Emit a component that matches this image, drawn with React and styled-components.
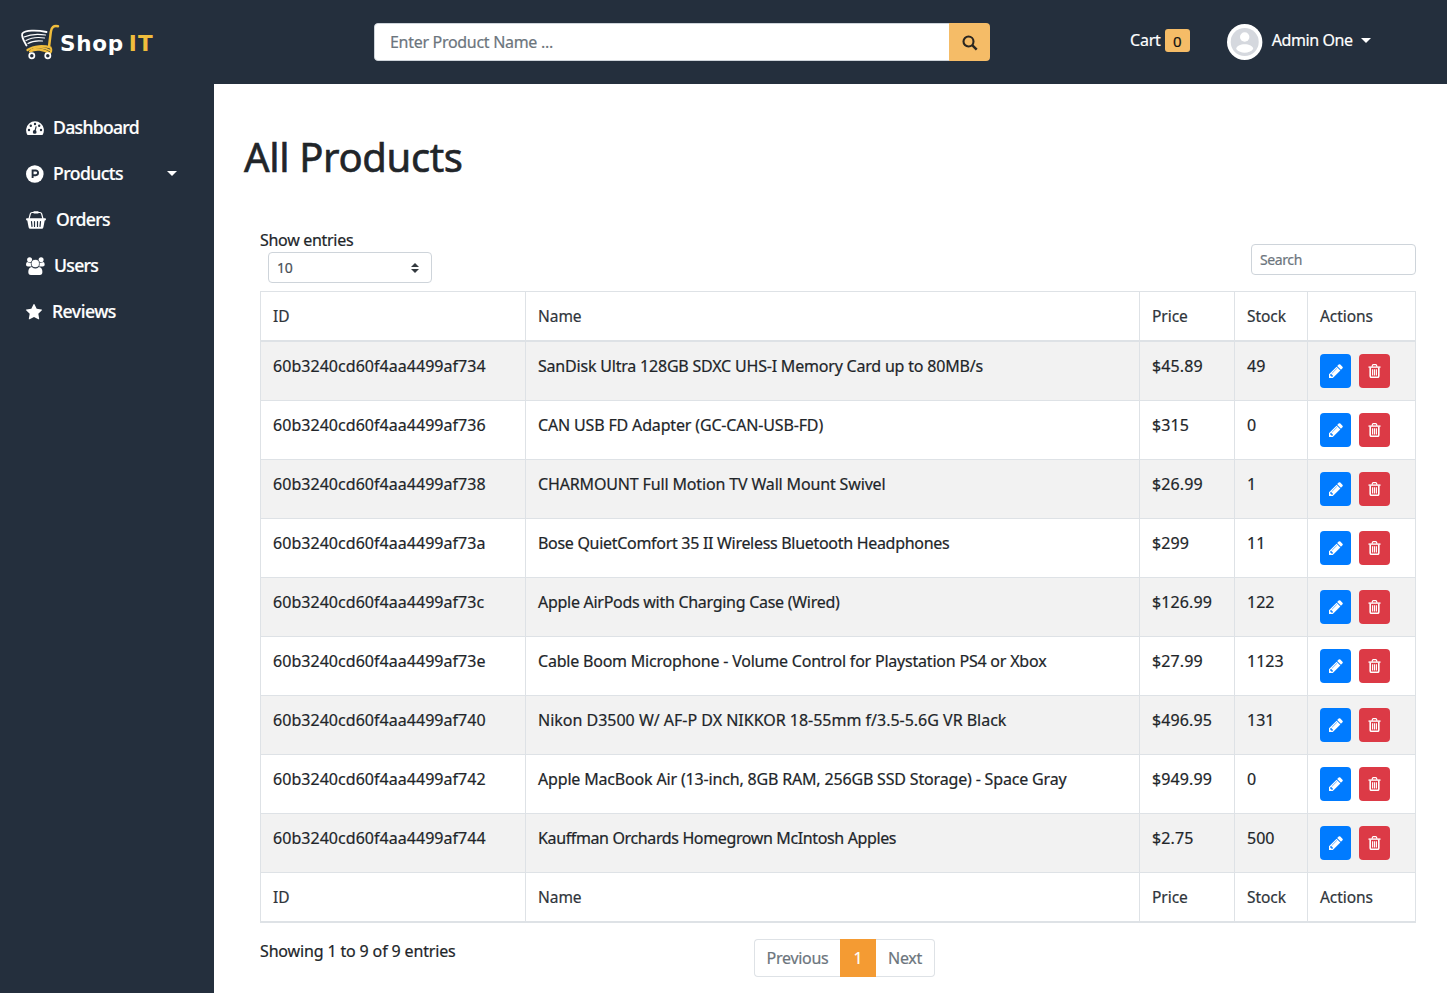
import React from 'react';
import styled, { createGlobalStyle, css } from 'styled-components';

const Global = createGlobalStyle`
  *, *::before, *::after { box-sizing: border-box; }
  body { margin: 0; background: #fff; color: #212529; font: 400 16px/24px 'Noto Sans', 'Open Sans', sans-serif; letter-spacing: -0.3px; -webkit-text-stroke: 0.2px; }
`;
const Page = styled.div`min-height: 993px; display: flex; flex-direction: column;`;
const Navbar = styled.header`height: 84px; background: #242f3d; display: flex; color: #fff;`;
const Brand = styled.div`width: 374px; padding: 23px 0 0 20px; display: flex; align-items: flex-start;`;
const BrandName = styled.span`
  font: 700 21.5px/42px 'DejaVu Sans', sans-serif; letter-spacing: 0.7px; -webkit-text-stroke: 0;
  b { color: #f0bd3c; margin-left: 5px; letter-spacing: 1.2px; }
`;
const SearchBar = styled.form`
  display: flex; width: 616px; height: 38px; margin-top: 23px; border-radius: 4px; overflow: hidden;
`;
const SearchInput = styled.input`
  flex: 1; border: 1px solid #ced4da; border-right: 0; border-radius: 4px 0 0 4px; padding: 0 15px;
  font: inherit; letter-spacing: -0.3px; outline: 0;
  &::placeholder { color: #6c757d; opacity: 1; }
`;
const SearchButton = styled.button`
  width: 41px; border: 0; background: #f5bc67; color: #2a2620; padding: 2px 0 0; display: grid; place-items: center;
`;
const Cart = styled.div`margin: 29px 0 0 140px; display: flex; height: 24px; line-height: 23px; gap: 4px; letter-spacing: -0.2px;`;
const Badge = styled.span`
  width: 25px; height: 23px; border-radius: 3px; background: #f5bc67; color: #111; text-align: center; font-size: 15px; line-height: 24px;
`;
const Account = styled.div`margin: 24px 0 0 37px; display: flex; gap: 9px; line-height: 33px; letter-spacing: -0.4px;`;
const Caret = styled.i`
  width: 0; height: 0; border: solid transparent; border-width: ${p => p.$size}px ${p => p.$size}px 0; border-top-color: #fff;
  margin: ${p => p.$margin};
`;
const Body = styled.div`display: flex; flex: 1;`;
const Sidebar = styled.nav`width: 214px; background: #242f3d; padding-top: 20px;`;
const NavItem = styled.a`
  display: flex; height: 46px; align-items: center; padding-left: 25px; color: #fff; font-weight: 500; font-size: 17.6px;
  letter-spacing: ${p => p.$ls || '-0.7px'};
  svg { margin: 2px ${p => p.$gap || 8}px 0 0; flex: none; }
`;
const Main = styled.main`flex: 1; padding: 48px 31px 0 30px;`;
const Title = styled.h1`margin: 0; font-size: 40px; line-height: 50px; font-weight: 400; letter-spacing: -0.35px; -webkit-text-stroke: 0.6px;`;
const Content = styled.section`padding: 46px 0 0 16px;`;
const Tools = styled.div`display: flex; justify-content: space-between; height: 63px;`;
const Select = styled.div`
  width: 164px; height: 31px; margin-left: 8px; border: 1px solid #ced4da; border-radius: 4px;
  display: flex; align-items: center; justify-content: space-between; padding: 0 12px 0 8px; font-size: 14px; color: #495057;
`;
const Filter = styled.input`
  width: 165px; height: 31px; margin-top: 16px; border: 1px solid #ced4da; border-radius: 4px; padding: 0 8px; font: inherit; font-size: 14px; letter-spacing: -0.4px;
  &::placeholder { color: #6c757d; opacity: 1; }
`;
const Table = styled.table`
  width: 1156px; border-collapse: collapse; table-layout: fixed; border: 1px solid #dee2e6;
`;
const cell = css`border: 1px solid #dee2e6; padding: 12px; text-align: left; vertical-align: top; white-space: nowrap;`;
const HeadCell = styled.th`${cell} font-weight: 400; height: 49px; font-size: 15.5px; border-bottom-width: 2px; letter-spacing: -0.05px; color: #2f353b;`;
const Cell = styled.td`${cell} height: 59px; letter-spacing: ${p => p.$tracking ?? 0}px;`;
const Row = styled.tr`background: ${p => (p.$odd ? '#f2f2f2' : '#fff')};`;
const Actions = styled.div`display: flex; gap: 8px;`;
const ActionButton = styled.button`
  width: 31px; height: 34px; border: 0; border-radius: 4px; padding: 0; display: grid; place-items: center; color: #fff;
  background: ${p => (p.$danger ? '#dc3a46' : '#007bff')};
`;
const Footer = styled.footer`display: flex; margin-top: 16px;`;
const Info = styled.div`width: 494px; letter-spacing: -0.15px;`;
const Pager = styled.div`display: flex; height: 38px;`;
const PageLink = styled.a`
  border: 1px solid ${p => (p.$active ? '#f49b33' : '#dee2e6')}; background: ${p => (p.$active ? '#f49b33' : '#fff')};
  color: ${p => (p.$active ? '#fff' : '#6c757d')}; width: ${p => p.$w}px; line-height: 36px; text-align: center; border-radius: ${p => p.$radius || 0};
  ${p => p.$edge && `border-${p.$edge}: 0;`}
`;

const Logo = () => (
  <svg width="40" height="38" viewBox="0 0 40 38" fill="none" strokeLinecap="round">
    <path d="M26.500 9C17 7 5 7 2.300 10.500C1 14 4.500 19 6.500 22.500" stroke="#fff" strokeWidth="1.800" />
    <path d="M25.500 12C18 10.800 10 11.300 4 14M24.500 15C18 14 11 14.700 6 17.500M22.500 18C18 17.500 12 18 8 20.500" stroke="#fff" strokeWidth="1.200" />
    <path d="M38 3.300C33.500 2.500 31.500 4 30.800 9L29 24" stroke="#f0bd3c" strokeWidth="2.500" />
    <path d="M7.500 27C14 22.300 24 22.500 30.500 24.500C32 27 31 29.500 29.500 30.500C24 25.800 15 25.500 10 28.500" stroke="#f0bd3c" strokeWidth="2.200" />
    <path d="M11 27C18 23.500 25 24.500 30 27.500" stroke="#f0bd3c" strokeWidth="1.600" />
    <circle cx="11.800" cy="32.800" r="2.600" stroke="#fff" strokeWidth="1.700" />
    <circle cx="27.800" cy="32.800" r="2.600" stroke="#fff" strokeWidth="1.700" />
  </svg>
);
const SearchIcon = () => (
  <svg width="16" height="16" viewBox="0 0 16 16" fill="none" stroke="currentColor" strokeWidth="2.100"><circle cx="6.500" cy="6.500" r="5" /><path d="M10.200 10.200L14.700 14.700" strokeWidth="2.500" /></svg>
);
const Avatar = () => (
  <svg width="36" height="36" viewBox="0 0 36 36"><ellipse cx="17.700" cy="18" rx="17.700" ry="18" fill="#fff" /><circle cx="17.700" cy="18" r="14" fill="#d5d8de" /><circle cx="17.700" cy="13" r="4.700" fill="#fff" /><path d="M9.200 25C9.200 18.500 26.200 18.500 26.200 25C22.200 30 13.200 30 9.200 25Z" fill="#fff" /></svg>
);
const Dashboard = () => (
  <svg width="20" height="18" viewBox="0 0 20 18" fill="#fff"><path d="M2.500 16A8.900 8.900 0 1 1 17.500 16Z" /><g fill="#242f3d"><circle cx="4" cy="11" r="1.200" /><circle cx="5.800" cy="6.800" r="1.200" /><circle cx="10" cy="5" r="1.200" /><circle cx="14.200" cy="6.800" r="1.200" /><circle cx="16" cy="11" r="1.200" /><circle cx="9.700" cy="12.900" r="1.900" /></g><path d="M9.800 12.500L11.200 7.300" stroke="#242f3d" strokeWidth="1.200" /></svg>
);
const ProductIcon = () => (
  <svg width="20" height="18" viewBox="0 0 20 18"><circle cx="9.800" cy="9" r="8.800" fill="#fff" /><path d="M7.600 13V5.500H10.700A2.350 2.350 0 0 1 10.700 10.200H7.600" fill="none" stroke="#242f3d" strokeWidth="1.900" /></svg>
);
const Basket = () => (
  <svg width="22" height="18" viewBox="0 0 22 18"><path d="M4 8L5.300 3Q5.700 1.500 7.100 1.500H14.900Q16.300 1.500 16.700 3L18 8" fill="none" stroke="#fff" strokeWidth="1.200" /><rect x="8.300" y=".3" width="5.400" height="2.300" rx=".8" fill="#fff" /><path d="M1.900 7.200H20.100Q21 7.200 21 8.300T20.100 9.400H19.700L18.400 16.200Q18.100 17.800 16.700 17.800H5.300Q3.900 17.800 3.600 16.200L2.300 9.400H1.900Q1 9.400 1 8.300T1.900 7.200Z" fill="#fff" /><path d="M6.500 10.600L7 15.400M9.500 10.600V15.400M12.500 10.600V15.400M15.500 10.600L15 15.400" stroke="#242f3d" strokeWidth="1.200" strokeLinecap="round" /></svg>
);
const Users = () => (
  <svg width="20" height="18" viewBox="0 0 20 18" fill="#fff"><circle cx="4.600" cy="2.700" r="2.500" /><circle cx="16.100" cy="2.700" r="2.500" /><path d="M6.500 9.500H3Q1 9.500 1 7.800Q1 5 2.400 5Q4.600 6.300 7 5.200ZM14.200 9.500H17.700Q19.700 9.500 19.700 7.800Q19.700 5 18.300 5Q16.100 6.300 13.700 5.200Z" /><path d="M6.800 10Q10.350 13 13.900 10Q17.400 10.300 17.400 15Q17.400 17.900 14.800 17.900H5.900Q3.300 17.900 3.300 15Q3.300 10.300 6.800 10Z" /><circle cx="10.350" cy="6.500" r="4.100" stroke="#242f3d" strokeWidth=".7" /></svg>
);
const Star = () => (
  <svg width="18" height="18" viewBox="-90 -90 1844 1844" fill="#fff"><path d="M1664 615q0 22-26 48l-363 354 86 500q1 7 1 20 0 21-10.500 35.500T1321 1587q-19 0-40-12l-449-236-449 236q-22 12-40 12-21 0-31.500-14.500T301 1537q0-6 2-20l86-500L25 663Q0 636 0 615q0-37 56-46l502-73L783 41q19-41 49-41t49 41l225 455 502 73q56 9 56 46z" /></svg>
);
const Pencil = () => (
  <svg width="14" height="14" viewBox="0 0 1536 1536" fill="currentColor"><path d="M363 1408l91-91-235-235-91 91v107h128v128h107zM886 480q0-22-22-22-10 0-17 7l-542 542q-7 7-7 17 0 22 22 22 10 0 17-7l542-542q7-7 7-17zM832 288l416 416-832 832H0v-416zM1515 384q0 53-37 90l-166 166-416-416 165-165q36-38 90-38 53 0 91 38l235 234q38 40 38 91z" /></svg>
);
const Trash = () => (
  <svg width="13" height="14" viewBox="0 0 13 14" fill="none" stroke="currentColor"><path d="M4 2.700L4.600 1.100Q4.800.7 5.300.7H7.700Q8.200.7 8.400 1.100L9 2.700" strokeWidth="1.200" /><path d="M.5 3.100H12.500" strokeWidth="1.400" /><path d="M2.200 3.500V12Q2.200 13.300 3.300 13.300H9.700Q10.800 13.300 10.800 12V3.500" strokeWidth="1.600" /><path d="M4.600 5.200V11.500M6.500 5.200V11.500M8.400 5.200V11.500" strokeWidth="1.150" /></svg>
);

const products = [
  { id: '60b3240cd60f4aa4499af734', name: 'SanDisk Ultra 128GB SDXC UHS-I Memory Card up to 80MB/s', price: '$45.89', stock: '49', tracking: -0.2 },
  { id: '60b3240cd60f4aa4499af736', name: 'CAN USB FD Adapter (GC-CAN-USB-FD)', price: '$315', stock: '0', tracking: -0.16 },
  { id: '60b3240cd60f4aa4499af738', name: 'CHARMOUNT Full Motion TV Wall Mount Swivel', price: '$26.99', stock: '1', tracking: -0.15 },
  { id: '60b3240cd60f4aa4499af73a', name: 'Bose QuietComfort 35 II Wireless Bluetooth Headphones', price: '$299', stock: '11', tracking: -0.3 },
  { id: '60b3240cd60f4aa4499af73c', name: 'Apple AirPods with Charging Case (Wired)', price: '$126.99', stock: '122', tracking: -0.28 },
  { id: '60b3240cd60f4aa4499af73e', name: 'Cable Boom Microphone - Volume Control for Playstation PS4 or Xbox', price: '$27.99', stock: '1123', tracking: -0.21 },
  { id: '60b3240cd60f4aa4499af740', name: 'Nikon D3500 W/ AF-P DX NIKKOR 18-55mm f/3.5-5.6G VR Black', price: '$496.95', stock: '131', tracking: -0.01 },
  { id: '60b3240cd60f4aa4499af742', name: 'Apple MacBook Air (13-inch, 8GB RAM, 256GB SSD Storage) - Space Gray', price: '$949.99', stock: '0', tracking: -0.17 },
  { id: '60b3240cd60f4aa4499af744', name: 'Kauffman Orchards Homegrown McIntosh Apples', price: '$2.75', stock: '500', tracking: -0.37 },
];
const columns = ['ID', 'Name', 'Price', 'Stock', 'Actions'];
const widths = [265, 614, 95, 73, 108];
const Headings = () => <tr>{columns.map(c => <HeadCell key={c}>{c}</HeadCell>)}</tr>;

export default function App() {
  return (
    <Page>
      <Global />
      <Navbar>
        <Brand><Logo /><BrandName>Shop<b>IT</b></BrandName></Brand>
        <SearchBar><SearchInput placeholder="Enter Product Name ..." /><SearchButton type="button"><SearchIcon /></SearchButton></SearchBar>
        <Cart>Cart<Badge>0</Badge></Cart>
        <Account><Avatar />Admin One<Caret $size={5} $margin="14px 0 0 -1px" /></Account>
      </Navbar>
      <Body>
        <Sidebar>
          <NavItem><Dashboard />Dashboard</NavItem>
          <NavItem $ls="-0.55px"><ProductIcon />Products<Caret $size={5.5} $margin="1px 0 0 44px" /></NavItem>
          <NavItem $gap={9} $ls="-0.65px"><Basket />Orders</NavItem>
          <NavItem $gap={9}><Users />Users</NavItem>
          <NavItem $gap={9} $ls="-0.5px"><Star />Reviews</NavItem>
        </Sidebar>
        <Main>
          <Title>All Products</Title>
          <Content>
            <Tools>
              <div>Show entries
                <Select>10<svg width="8" height="10" viewBox="0 0 8 10" fill="#343a40"><path d="M0 4L4 0L8 4ZM0 6H8L4 10Z" /></svg></Select>
              </div>
              <Filter placeholder="Search" />
            </Tools>
            <Table>
              <colgroup>{widths.map((w, i) => <col key={i} width={w} />)}</colgroup>
              <thead><Headings /></thead>
              <tbody>
                {products.map(({ id, name, price, stock, tracking }, i) => (
                  <Row key={id} $odd={i % 2 === 0}>
                    <Cell $tracking={0.04}>{id}</Cell><Cell $tracking={tracking}>{name}</Cell><Cell $tracking={0.1}>{price}</Cell><Cell>{stock}</Cell>
                    <Cell><Actions><ActionButton><Pencil /></ActionButton><ActionButton $danger><Trash /></ActionButton></Actions></Cell>
                  </Row>
                ))}
              </tbody>
              <tfoot><Headings /></tfoot>
            </Table>
            <Footer>
              <Info>Showing 1 to 9 of 9 entries</Info>
              <Pager><PageLink $w={86} $radius="4px 0 0 4px" $edge="right">Previous</PageLink><PageLink $w={36} $active>1</PageLink><PageLink $w={59} $radius="0 4px 4px 0" $edge="left">Next</PageLink></Pager>
            </Footer>
          </Content>
        </Main>
      </Body>
    </Page>
  );
}
